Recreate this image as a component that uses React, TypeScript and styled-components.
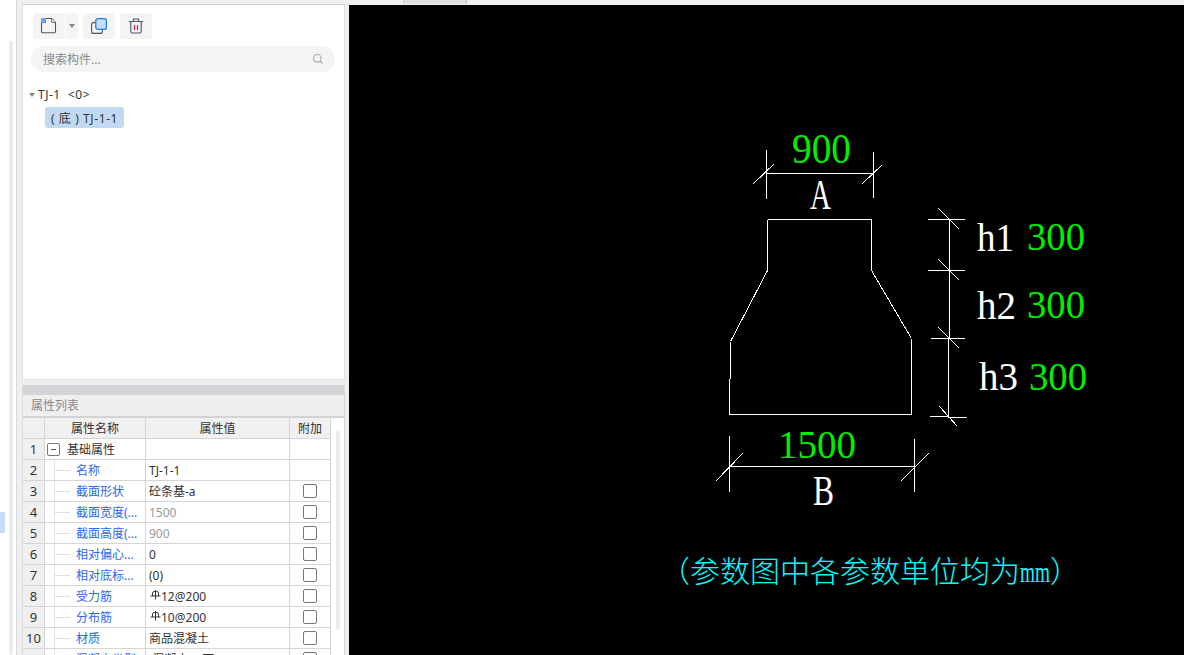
import React from "react";
import styled, { createGlobalStyle } from "styled-components";

const Global = createGlobalStyle`
  html, body { margin: 0; padding: 0; width: 1184px; height: 655px; overflow: hidden; background: #f0f0f0; }
  body { font-family: "Noto Sans", "Noto Sans CJK SC", sans-serif; }
`;
const Page = styled.div`
  display: flex; width: 1184px; height: 655px; overflow: hidden; background: #efefef;
`;
const LeftRail = styled.div`
  width: 16px; height: 655px; flex: none; background: #fff; border-right: 1px solid #d9d9d9;
  display: flex; position: relative; box-sizing: content-box;
`;
const RailTrack = styled.div`
  width: 4px; margin: 41px 0 0 9px; height: 614px; background: #ececec; border-radius: 2px;
`;
const RailSelection = styled.div`
  position: absolute; left: 0; top: 512px; width: 5px; height: 21px; background: #c5dcf5;
`;
const Side = styled.div`
  width: 323px; margin-left: 5px; flex: none; display: flex; flex-direction: column; height: 655px;
`;
const TopStrip = styled.div`
  height: 4px; flex: none; border-bottom: 1px solid #cfcfcf; background: #efefef;
`;
const ComponentPanel = styled.div`
  height: 375px; flex: none; background: #fff; border: 1px solid #e2e2e2; border-width: 0 1px 1px 1px;
  box-sizing: border-box; padding: 8px 9px 0 8px;
`;
const Toolbar = styled.div`
  display: flex; gap: 5px; height: 26px; margin-left: 2px;
`;
const ToolGroup = styled.div`
  display: flex; gap: 1px;
`;
const ToolBtn = styled.button<{ $w: number; $r?: string }>`
  width: ${p => p.$w}px; height: 26px; padding: 0; border: 0; background: #f4f4f4;
  border-radius: ${p => p.$r ?? "4px"}; display: flex; align-items: center; justify-content: center;
`;
const Search = styled.div`
  margin-top: 7px; height: 26px; width: 304px; border-radius: 13px; background: #f4f4f4;
  display: flex; align-items: center; justify-content: space-between; padding: 0 11px 0 12px;
  box-sizing: border-box; font-size: 12px; color: #8a8a8a;
`;
const TreeRoot = styled.div`
  margin: 14px 0 0 -2px; height: 16px; display: flex; align-items: center; gap: 3px;
  font-size: 12px; letter-spacing: 0.5px; color: #333; white-space: pre;
`;
const Caret = styled.span`
  width: 0; height: 0; border: 3px solid transparent; border-top: 4px solid #888; border-bottom: 0; margin-top: 1px;
`;
const TreeChip = styled.div`
  margin: 5px 0 0 14px; width: 79px; height: 21px; background: #c2d9f2; border-radius: 3px;
  font-size: 12px; letter-spacing: 0.6px; color: #333; display: flex; align-items: center; justify-content: center; white-space: pre;
`;
const PropPanel = styled.div`
  margin-top: 5px; flex: 1; min-height: 0; display: flex; flex-direction: column; background: #fff;
  border: 1px solid #dcdcdc; border-width: 0 1px; overflow: hidden;
`;
const Grip = styled.div`
  height: 10px; flex: none; background: #d4d5d9;
`;
const PropTitle = styled.div`
  height: 23px; flex: none; background: #efefef; border-bottom: 2px solid #d3d3d3; box-sizing: border-box;
  padding: 2px 0 0 8px; font-size: 12px; line-height: 18px; color: #8a8a8a;
`;
const TableWrap = styled.div`
  display: flex; position: relative;
`;
const Table = styled.div`
  display: grid; grid-template-columns: 22px 101px 144px 41px; grid-auto-rows: 21px; width: 308px;
`;
const Cell = styled.div<{ $head?: boolean; $index?: boolean; $tone?: string; $center?: boolean }>`
  box-sizing: border-box; border-right: 1px solid #d5d5d5; border-bottom: 1px solid #d5d5d5;
  background: ${p => (p.$head || p.$index ? "#f0f0f0" : "#fff")};
  color: ${p => p.$tone ?? "#333"}; font-size: ${p => (p.$index ? "13px" : "12px")}; white-space: nowrap; overflow: hidden;
  display: flex; align-items: center; position: relative;
  justify-content: ${p => (p.$head || p.$index || p.$center ? "center" : "flex-start")};
  padding-left: ${p => (p.$head || p.$index || p.$center ? "0" : "3px")};
`;
const NameCell = styled(Cell)`
  padding-left: 31px; color: #2b68e6;
  &::before { content: ""; position: absolute; left: 9px; top: 0; bottom: 0; width: 1px; background: #e4e4e4; }
  &::after { content: ""; position: absolute; left: 9px; top: 10px; width: 16px; height: 1px; background: #e0e0e0; }
`;
const GroupCell = styled(Cell)`
  padding-left: 2px; gap: 7px;
`;
const Toggle = styled.span`
  width: 11px; height: 11px; border: 1px solid #777; border-radius: 2px; display: inline-flex;
  align-items: center; justify-content: center; flex: none;
  &::before { content: ""; width: 5px; height: 1px; background: #555; }
`;
const Check = styled.span`
  width: 12px; height: 12px; border: 1px solid #777; border-radius: 2px; background: #fff;
`;
const RebarMark = styled.svg`
  width: 11px; height: 10px; margin: -3px 0 0 1px; flex: none;
`;
const TableScroll = styled.div`
  position: absolute; left: 313px; top: 12px; width: 4px; height: 200px; background: #ececec; border-radius: 2px;
`;
const Gutter = styled.div`
  width: 4px; flex: none;
`;
const Main = styled.div`
  flex: 1; display: flex; flex-direction: column; min-width: 0;
`;
const Tabs = styled.div`
  height: 5px; flex: none; display: flex; background: #efefef; padding-left: 54px;
`;
const TabActive = styled.div`
  width: 64px; height: 4px; background: #dedede; border: 1px solid #c8c8c8; border-width: 0 1px; box-sizing: border-box;
`;
const Canvas = styled.svg`
  display: block; width: 835px; height: 650px; background: #000; flex: none;
`;

const Rebar = () => (
  <RebarMark viewBox="0 0 11 10">
    <path d="M2.5 6V3.2Q2.5 1.5 4.2 1.5H6.8Q8.5 1.5 8.5 3.2V6M0.5 6H10.5M5.5 0V9.5" fill="none" stroke="#333" strokeWidth="1" />
  </RebarMark>
);

type Row = { n: number; name: string; value?: React.ReactNode; grey?: boolean; check?: boolean };
const rows: Row[] = [
  { n: 2, name: "名称", value: "TJ-1-1" },
  { n: 3, name: "截面形状", value: "砼条基-a", check: true },
  { n: 4, name: "截面宽度(...", value: "1500", grey: true, check: true },
  { n: 5, name: "截面高度(...", value: "900", grey: true, check: true },
  { n: 6, name: "相对偏心...", value: "0", check: true },
  { n: 7, name: "相对底标...", value: "(0)", check: true },
  { n: 8, name: "受力筋", value: <><Rebar />12@200</>, check: true },
  { n: 9, name: "分布筋", value: <><Rebar />10@200</>, check: true },
  { n: 10, name: "材质", value: "商品混凝土", check: true },
  { n: 11, name: "混凝土类型", value: "(混凝土20石)", check: true },
];

const White = "#fff";
const Green = "#00ee00";
const lines: [number, number, number, number][] = [
  // A dimension
  [767, 149, 767, 198], [874, 151, 874, 197], [767, 173, 874, 173], [754, 183, 775, 163], [863, 183, 883, 164],
  // outline
  [768, 219, 872, 219], [768, 219, 768, 270], [872, 219, 872, 270], [768, 270, 731, 341], [872, 270, 912, 338],
  [731, 341, 731, 378], [730, 378, 730, 414], [912, 338, 912, 414], [730, 414, 912, 414],
  // h dimension
  [928, 219, 965, 219], [928, 270, 965, 270], [931, 338, 965, 338], [931, 416, 968, 417],
  [950, 219, 950, 338], [949, 338, 949, 417], [939, 208, 960, 229], [939, 259, 960, 280], [939, 327, 960, 348], [940, 406, 958, 426],
  // B dimension
  [730, 435, 730, 491], [915, 438, 915, 491], [730, 466, 915, 466], [716, 481, 743, 453], [901, 481, 929, 453],
];

const labels: { x: number; y: number; t: string; c: string; s: number; w: number }[] = [
  { x: 792, y: 163, t: "900", c: Green, s: 42, w: 59 },
  { x: 810, y: 209, t: "A", c: White, s: 42, w: 21 },
  { x: 977, y: 251, t: "h1", c: White, s: 41, w: 37 },
  { x: 1027, y: 250, t: "300", c: Green, s: 41, w: 58 },
  { x: 977, y: 319, t: "h2", c: White, s: 41, w: 39 },
  { x: 1027, y: 318, t: "300", c: Green, s: 41, w: 58 },
  { x: 979, y: 390, t: "h3", c: White, s: 41, w: 39 },
  { x: 1029, y: 390, t: "300", c: Green, s: 41, w: 58 },
  { x: 778, y: 458, t: "1500", c: Green, s: 41, w: 78 },
  { x: 813, y: 505, t: "B", c: White, s: 42, w: 21 },
];

export default function App() {
  return (
    <Page>
      <Global />
      <LeftRail>
        <RailTrack />
        <RailSelection />
      </LeftRail>
      <Side>
        <TopStrip />
        <ComponentPanel>
          <Toolbar>
            <ToolGroup>
              <ToolBtn $w={32} $r="4px 0 0 4px" aria-label="新建">
                <svg width="20" height="20" viewBox="0 0 20 20">
                  <path d="M7 2.5H12.5L16.5 6.5V15.5a1.2 1.2 0 0 1-1.2 1.2H3.7a1.2 1.2 0 0 1-1.2-1.2V7" fill="none" stroke="#4a5568" strokeWidth="1.1" />
                  <path d="M12.5 2.5V6.5H16.5" fill="#dfe3ea" stroke="#4a5568" strokeWidth="0.7" />
                  <rect x="2" y="2" width="5" height="5" fill="#3b82f0" />
                  <path d="M3 2V7M5 2V7M2 3H7M2 5H7" stroke="#a9cbf7" strokeWidth="0.6" />
                </svg>
              </ToolBtn>
              <ToolBtn $w={12} $r="0 4px 4px 0" aria-label="更多">
                <svg width="6" height="4" viewBox="0 0 6 4"><path d="M0 0H6L3 4Z" fill="#888" /></svg>
              </ToolBtn>
            </ToolGroup>
            <ToolBtn $w={32} aria-label="复制">
              <svg width="20" height="20" viewBox="0 0 20 20">
                <rect x="2.6" y="6.6" width="10.8" height="10.8" rx="2" fill="none" stroke="#4a5568" strokeWidth="1.1" />
                <rect x="6.8" y="2.6" width="10.6" height="10.8" rx="2" fill="#c7dcf6" stroke="#1e7be6" strokeWidth="1.2" />
              </svg>
            </ToolBtn>
            <ToolBtn $w={32} aria-label="删除">
              <svg width="20" height="20" viewBox="0 0 20 20">
                <path d="M3 5.5H17M7.5 5.5V3H12.5V5.5M4.8 5.5V15.5a1.5 1.5 0 0 0 1.5 1.5H13.7a1.5 1.5 0 0 0 1.5-1.5V5.5" fill="none" stroke="#4a5568" strokeWidth="1.1" />
                <path d="M8.5 9V14M11.5 9V14" stroke="#d9262c" strokeWidth="1.2" />
              </svg>
            </ToolBtn>
          </Toolbar>
          <Search>
            搜索构件...
            <svg width="12" height="12" viewBox="0 0 12 12">
              <circle cx="5.3" cy="5.3" r="3.8" fill="none" stroke="#aaa" strokeWidth="1.2" />
              <path d="M8 8L10.5 10.5" stroke="#aaa" strokeWidth="1.2" />
            </svg>
          </Search>
          <TreeRoot><Caret />TJ-1  &lt;0&gt;</TreeRoot>
          <TreeChip>( 底 ) TJ-1-1</TreeChip>
        </ComponentPanel>
        <PropPanel>
          <Grip />
          <PropTitle>属性列表</PropTitle>
          <TableWrap>
            <Table>
              <Cell $head />
              <Cell $head>属性名称</Cell>
              <Cell $head>属性值</Cell>
              <Cell $head>附加</Cell>
              <Cell $index>1</Cell>
              <GroupCell><Toggle />基础属性</GroupCell>
              <Cell />
              <Cell />
              {rows.map(r => (
                <React.Fragment key={r.n}>
                  <Cell $index>{r.n}</Cell>
                  <NameCell>{r.name}</NameCell>
                  <Cell $tone={r.grey ? "#999" : undefined}>{r.value}</Cell>
                  <Cell $center>{r.check && <Check />}</Cell>
                </React.Fragment>
              ))}
            </Table>
            <TableScroll />
          </TableWrap>
        </PropPanel>
      </Side>
      <Gutter />
      <Main>
        <Tabs><TabActive /></Tabs>
        <Canvas viewBox="349 5 835 650">
          <g stroke="#fff" strokeWidth="1" shapeRendering="crispEdges">
            {lines.map((l, i) => (
              <line key={i} x1={l[0] - 0.5} y1={l[1] + 0.5} x2={l[2] - 0.5} y2={l[3] + 0.5} />
            ))}
          </g>
          <g fontFamily='"Liberation Serif", serif'>
            {labels.map((l, i) => (
              <text key={i} x={l.x} y={l.y} fill={l.c} fontSize={l.s} textLength={l.w} lengthAdjust="spacingAndGlyphs">{l.t}</text>
            ))}
          </g>
          <text x="660" y="582" fill="#00ffff" fontSize="30" fontWeight="300" fontFamily='"Noto Sans CJK SC", serif'>
            （参数图中各参数单位均为
            <tspan fontFamily='"Liberation Serif", serif' textLength="30" lengthAdjust="spacingAndGlyphs">mm</tspan>
            ）
          </text>
        </Canvas>
      </Main>
    </Page>
  );
}
